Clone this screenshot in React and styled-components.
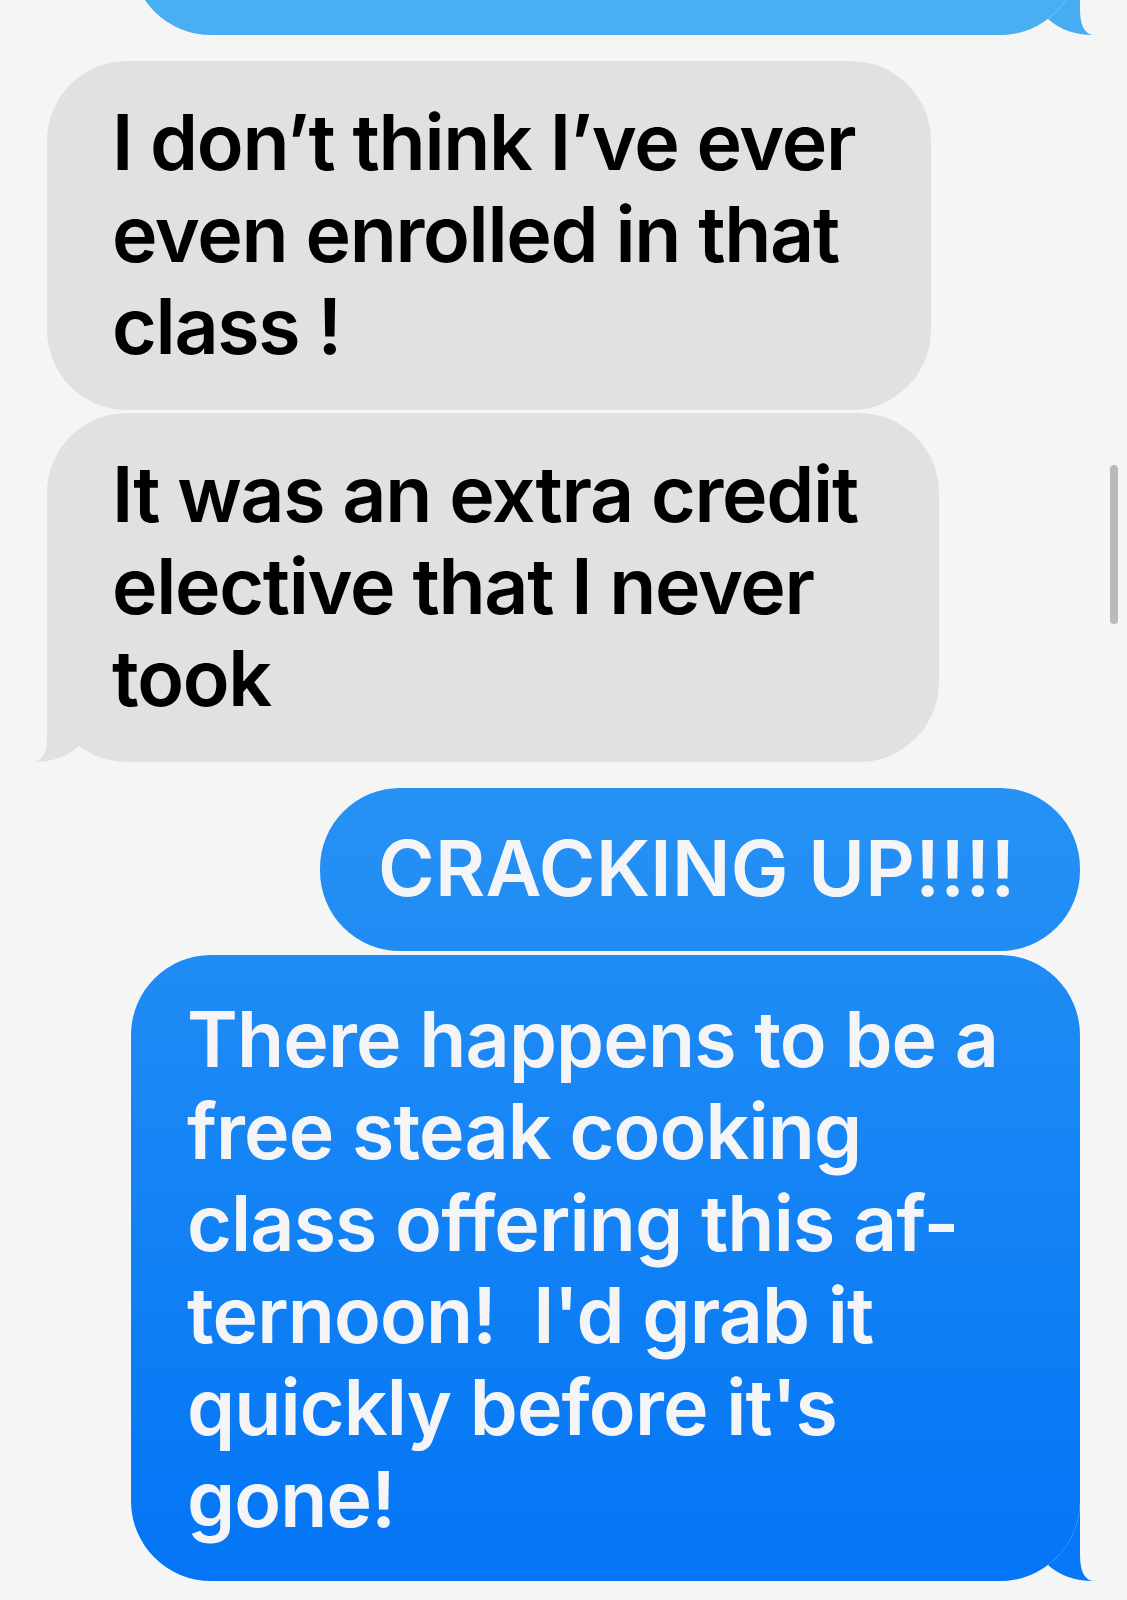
import React from 'react'
import styled, { createGlobalStyle } from 'styled-components'

const GlobalStyle = createGlobalStyle`
  html, body {
    margin: 0;
    padding: 0;
    background: #f5f5f5;
  }
  body {
    font-family: Inter, "Noto Sans", sans-serif;
  }
`

const Thread = styled.div`
  position: relative;
  box-sizing: border-box;
  min-height: 1600px;
  padding: 0 47px;
  display: flex;
  flex-direction: column;
  overflow: hidden;
`

const Row = styled.div`
  display: flex;
  justify-content: ${p => (p.$mine ? 'flex-end' : 'flex-start')};
  margin-top: ${p => p.$gap}px;
`

const Bubble = styled.div`
  position: relative;
  box-sizing: border-box;
  width: ${p => p.$width}px;
  height: ${p => (p.$height ? `${p.$height}px` : 'auto')};
  padding: ${p => p.$padTop ?? 38}px ${p => p.$padRight}px
    ${p => p.$padBottom ?? 36}px ${p => p.$padLeft}px;
  border-radius: 80px;
  font-size: 77px;
  line-height: 92px;
  font-weight: 600;
  letter-spacing: ${p => p.$tracking ?? -1}px;
  white-space: nowrap;
  color: ${p => (p.$mine ? '#f5f5f7' : '#000')};
  background: ${p =>
    p.$mine ? 'linear-gradient(180deg, #4aaff2 0%, #0274f6 100%)' : '#e1e1e3'};
  background-attachment: fixed;
`

const TailShape = styled.svg`
  position: absolute;
  bottom: 0;
  width: 93px;
  height: 80px;
  ${p => (p.$side === 'left' ? 'left: -13px;' : 'right: -13px;')}
  transform: ${p => (p.$side === 'left' ? 'scaleX(-1)' : 'none')};
`

const Tail = ({ side = 'right', color }) => (
  <TailShape $side={side} viewBox="0 0 93 80">
    <path
      d="M80 0 V54 Q80 78 93 80 Q66 80 48 64 A80 80 0 0 0 80 0 Z"
      fill={color}
    />
  </TailShape>
)

const Scrollbar = styled.div`
  position: absolute;
  top: 465px;
  right: 9px;
  width: 8px;
  height: 159px;
  border-radius: 4px;
  background: #bababa;
`

export default function App() {
  return (
    <>
      <GlobalStyle />
      <Thread>
        <Row $mine $gap={-125}>
          <Bubble $mine $width={949} $height={160} $padLeft={56} $padRight={60}>
            <Tail color="#47adf2" />
          </Bubble>
        </Row>

        <Row $gap={26}>
          <Bubble
            $width={884}
            $padTop={35}
            $padBottom={38}
            $padLeft={65}
            $padRight={40}
            $tracking={-1.3}
          >
            I don’t think I’ve ever
            <br />
            even enrolled in that
            <br />
            class !
          </Bubble>
        </Row>

        <Row $gap={3}>
          <Bubble
            $width={892}
            $padTop={35}
            $padBottom={38}
            $padLeft={65}
            $padRight={40}
            $tracking={-1.3}
          >
            It was an extra credit
            <br />
            elective that I never
            <br />
            took
            <Tail side="left" color="#e1e1e3" />
          </Bubble>
        </Row>

        <Row $mine $gap={26}>
          <Bubble
            $mine
            $width={760}
            $padTop={34}
            $padBottom={37}
            $padLeft={58}
            $padRight={40}
            $tracking={0.3}
          >
            CRACKING UP!!!!
          </Bubble>
        </Row>

        <Row $mine $gap={4}>
          <Bubble $mine $width={949} $padLeft={56} $padRight={60} $tracking={-0.85}>
            There happens to be a
            <br />
            free steak cooking
            <br />
            class offering this af-
            <br />
            ternoon!&nbsp; I'd grab it
            <br />
            quickly before it's
            <br />
            gone!
            <Tail color="#0677f6" />
          </Bubble>
        </Row>

        <Scrollbar />
      </Thread>
    </>
  )
}
